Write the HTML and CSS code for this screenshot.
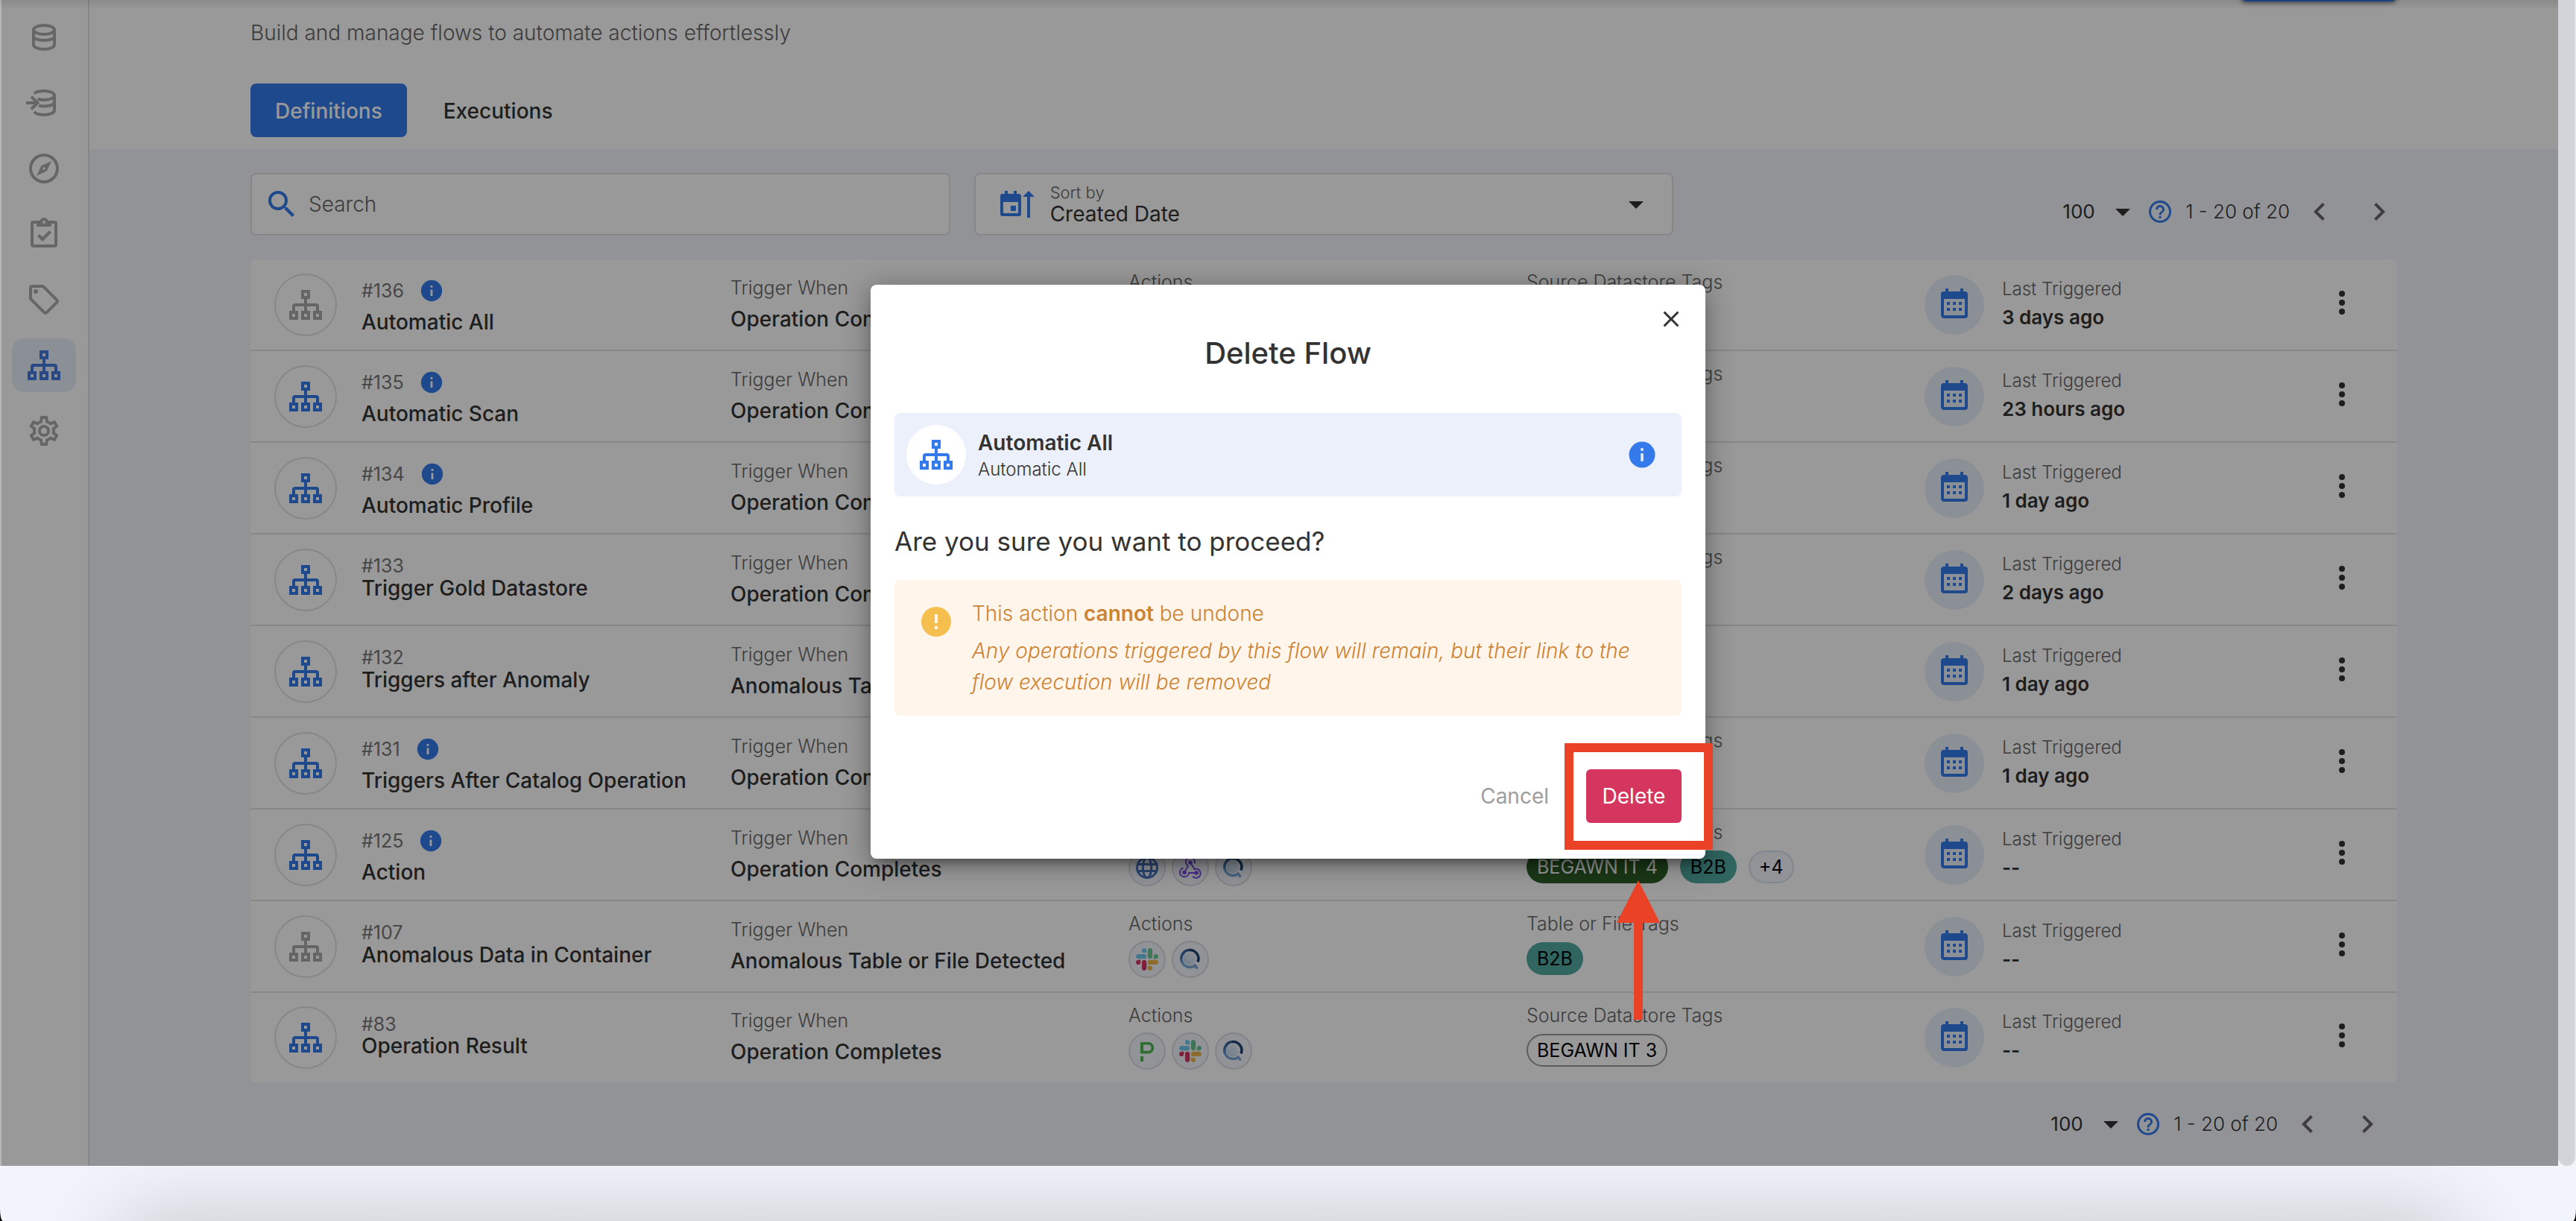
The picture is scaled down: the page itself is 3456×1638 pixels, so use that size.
FILE: index.html
```html
<!DOCTYPE html>
<html lang="en">
<head>
<meta charset="utf-8">
<title>Flows</title>
<link rel="stylesheet" href="styles.css">
</head>
<body>
<svg class="sprite" aria-hidden="true">
  <defs>
    <linearGradient id="q-ring" x1="0" y1="0" x2="0" y2="1">
      <stop offset="0" stop-color="#2f5a94"/><stop offset="0.5" stop-color="#4f7fb8"/><stop offset="0.7" stop-color="#7ba7d6"/>
    </linearGradient>
    <linearGradient id="q-fill" x1="1" y1="0" x2="0" y2="1">
      <stop offset="0" stop-color="#eef2f8"/><stop offset="1" stop-color="#b9cfe8"/>
    </linearGradient>
  </defs>
  <symbol id="database" viewBox="0 0 24 24"><g fill="none" stroke="currentColor" stroke-width="2"><ellipse cx="12" cy="7" rx="7" ry="3"/><path d="M5 7v10c0 1.700 3.100 3 7 3s7-1.300 7-3V7M5 12c1 1.300 3.700 2 7 2s6-.7 7-2"/></g></symbol>
  <symbol id="database-import" viewBox="0 0 24 24"><g fill="none" stroke="currentColor" stroke-width="2"><path d="M5.500 5.800C6.500 4.700 9 4 12 4c3.900 0 7 1.300 7 3s-3.100 3-7 3c-1.600 0-3-.2-4.200-.6M19 7v10c0 1.700-3.100 3-7 3-3 0-5.500-.8-6.500-2M19 12c-1 1.300-3.700 2.200-7 2.200-1.300 0-2.500-.1-3.500-.4M0 12h8M3.500 7.800 7.700 12l-4.200 4.200"/></g></symbol>
  <symbol id="compass" viewBox="0 0 24 24"><path fill="currentColor" fill-rule="evenodd" d="M7,17L10.200,10.200L17,7L13.800,13.800L7,17M12,11.100A0.900,0.900 0 0,0 11.100,12A0.900,0.900 0 0,0 12,12.900A0.900,0.900 0 0,0 12.900,12A0.900,0.900 0 0,0 12,11.100M12,2A10,10 0 0,0 2,12A10,10 0 0,0 12,22A10,10 0 0,0 22,12A10,10 0 0,0 12,2M12,20A8,8 0 1,1 12,4A8,8 0 1,1 12,20Z"/></symbol>
  <symbol id="clipboard" viewBox="0 0 24 24"><path fill="currentColor" d="M19,3H14.820C14.400,1.840 13.300,1 12,1C10.700,1 9.600,1.840 9.180,3H5A2,2 0 0,0 3,5V19A2,2 0 0,0 5,21H19A2,2 0 0,0 21,19V5A2,2 0 0,0 19,3M12,3A1,1 0 0,1 13,4A1,1 0 0,1 12,5A1,1 0 0,1 11,4A1,1 0 0,1 12,3M7,7H17V5H19V19H5V5H7V7M7.500,13.500L9,12L11,14L15.500,9.500L17,11L11,17L7.500,13.500Z"/></symbol>
  <symbol id="tag" viewBox="0 0 24 24"><path fill="currentColor" fill-rule="evenodd" d="M21.410 11.580l-9-9A2 2 0 0 0 11 2H4a2 2 0 0 0-2 2v7a2 2 0 0 0 .59 1.420l9 9A2 2 0 0 0 13 22a2 2 0 0 0 1.410-.59l7-7A2 2 0 0 0 22 13a2 2 0 0 0-.59-1.420M13 20l-9-9V4h7l9 9zM6.500 5A1.500 1.500 0 1 1 5 6.500 1.500 1.500 0 0 1 6.500 5z"/></symbol>
  <symbol id="flow" viewBox="0 0 24 24"><path fill="currentColor" fill-rule="evenodd" d="M9 2h6v6h-2v3h6a2 2 0 0 1 2 2v3h2v6h-6v-6h2v-3h-6v3h2v6H9v-6h2v-3H5v3h2v6H1v-6h2v-3a2 2 0 0 1 2-2h6V8H9zM11 4v2h2V4zM3 18v2h2v-2zM11 18v2h2v-2zM19 18v2h2v-2z"/></symbol>
  <symbol id="cog" viewBox="0 0 24 24"><path fill="currentColor" d="M12,8A4,4 0 0,1 16,12A4,4 0 0,1 12,16A4,4 0 0,1 8,12A4,4 0 0,1 12,8M12,10A2,2 0 0,0 10,12A2,2 0 0,0 12,14A2,2 0 0,0 14,12A2,2 0 0,0 12,10M10,22C9.750,22 9.540,21.820 9.500,21.580L9.130,18.930C8.500,18.680 7.960,18.340 7.440,17.940L4.950,18.950C4.730,19.030 4.460,18.950 4.340,18.730L2.340,15.270C2.210,15.050 2.270,14.780 2.460,14.630L4.570,12.970L4.500,12L4.570,11L2.460,9.370C2.270,9.220 2.210,8.950 2.340,8.730L4.340,5.270C4.460,5.050 4.730,4.960 4.950,5.050L7.440,6.050C7.960,5.660 8.500,5.320 9.130,5.070L9.500,2.420C9.540,2.180 9.750,2 10,2H14C14.250,2 14.460,2.180 14.500,2.420L14.870,5.070C15.500,5.320 16.040,5.660 16.560,6.050L19.050,5.050C19.270,4.960 19.540,5.050 19.660,5.270L21.660,8.730C21.790,8.950 21.730,9.220 21.540,9.370L19.430,11L19.500,12L19.430,13L21.540,14.630C21.730,14.780 21.790,15.050 21.660,15.270L19.660,18.730C19.540,18.950 19.270,19.040 19.050,18.950L16.560,17.950C16.040,18.340 15.500,18.680 14.870,18.930L14.500,21.580C14.460,21.820 14.250,22 14,22H10M11.250,4L10.880,6.610C9.680,6.860 8.620,7.500 7.850,8.390L5.440,7.350L4.690,8.650L6.800,10.200C6.400,11.370 6.400,12.640 6.800,13.800L4.680,15.360L5.430,16.660L7.860,15.620C8.630,16.500 9.680,17.140 10.870,17.380L11.240,20H12.760L13.130,17.390C14.320,17.140 15.370,16.500 16.140,15.620L18.570,16.660L19.320,15.360L17.200,13.810C17.600,12.640 17.600,11.370 17.200,10.200L19.310,8.650L18.560,7.350L16.150,8.390C15.380,7.500 14.320,6.860 13.120,6.620L12.750,4H11.250Z"/></symbol>
  <symbol id="search" viewBox="0 0 24 24"><path fill="currentColor" d="M9.500,3A6.500,6.500 0 0,1 16,9.500C16,11.110 15.410,12.590 14.440,13.730L14.710,14H15.500L20.500,19L19,20.500L14,15.500V14.710L13.730,14.440C12.590,15.410 11.110,16 9.500,16A6.500,6.500 0 0,1 3,9.500A6.500,6.500 0 0,1 9.500,3M9.500,5C7,5 5,7 5,9.500C5,12 7,14 9.500,14C12,14 14,12 14,9.500C14,7 12,5 9.500,5Z"/></symbol>
  <symbol id="sort-date" viewBox="0 0 24 24"><path fill="currentColor" fill-rule="evenodd" d="M3.500 3h2v2h4V3h2v2h1.500a1.500 1.500 0 0 1 1.500 1.500v12a1.500 1.500 0 0 1-1.500 1.500H2A1.500 1.500 0 0 1 .5 18.500v-12A1.500 1.500 0 0 1 2 5h1.500zM2.500 10.500v7.500h10v-7.500zM7.500 13H11v3.500H7.500zM19.500 3l4 4h-3v14h-2V7h-3z"/></symbol>
  <symbol id="caret" viewBox="0 0 24 24"><path fill="currentColor" d="M7 10l5 5 5-5z"/></symbol>
  <symbol id="help" viewBox="0 0 24 24"><path fill="currentColor" d="M11,18H13V16H11V18M12,2A10,10 0 0,0 2,12A10,10 0 0,0 12,22A10,10 0 0,0 22,12A10,10 0 0,0 12,2M12,20C7.590,20 4,16.410 4,12C4,7.590 7.590,4 12,4C16.410,4 20,7.590 20,12C20,16.410 16.410,20 12,20M12,6A4,4 0 0,0 8,10H10A2,2 0 0,1 12,8A2,2 0 0,1 14,10C14,12 11,11.750 11,15H13C13,12.750 16,12.500 16,10A4,4 0 0,0 12,6Z"/></symbol>
  <symbol id="prev" viewBox="0 0 24 24"><path fill="currentColor" d="M15.410,16.580L10.830,12L15.410,7.410L14,6L8,12L14,18L15.410,16.580Z"/></symbol>
  <symbol id="next" viewBox="0 0 24 24"><path fill="currentColor" d="M8.590,16.580L13.170,12L8.590,7.410L10,6L16,12L10,18L8.590,16.580Z"/></symbol>
  <symbol id="info" viewBox="0 0 24 24"><path fill="currentColor" d="M13,9H11V7H13M13,17H11V11H13M12,2A10,10 0 0,0 2,12A10,10 0 0,0 12,22A10,10 0 0,0 22,12A10,10 0 0,0 12,2Z"/></symbol>
  <symbol id="alert" viewBox="0 0 24 24"><path fill="currentColor" d="M13,13H11V7H13M13,17H11V15H13M12,2A10,10 0 0,0 2,12A10,10 0 0,0 12,22A10,10 0 0,0 22,12A10,10 0 0,0 12,2Z"/></symbol>
  <symbol id="calendar" viewBox="0 0 24 24"><path fill="currentColor" d="M9,10V12H7V10H9M13,10V12H11V10H13M17,10V12H15V10H17M19,3A2,2 0 0,1 21,5V19A2,2 0 0,1 19,21H5C3.890,21 3,20.100 3,19V5A2,2 0 0,1 5,3H6V1H8V3H16V1H18V3H19M19,19V8H5V19H19M9,14V16H7V14H9M13,14V16H11V14H13M17,14V16H15V14H17Z"/></symbol>
  <symbol id="dots" viewBox="0 0 24 24"><g fill="currentColor"><circle cx="12" cy="6" r="2"/><circle cx="12" cy="12" r="2"/><circle cx="12" cy="18" r="2"/></g></symbol>
  <symbol id="close" viewBox="0 0 24 24"><path fill="currentColor" d="M19,6.410L17.590,5L12,10.590L6.410,5L5,6.410L10.590,12L5,17.590L6.410,19L12,13.410L17.590,19L19,17.590L13.410,12L19,6.410Z"/></symbol>
  <symbol id="web" viewBox="0 0 30 30"><g fill="none" stroke="#4873bf" stroke-width="3"><circle cx="15" cy="15" r="13.500"/><ellipse cx="15" cy="15" rx="5.700" ry="13.500"/><path d="M2 10.500h26M2 19.500h26"/></g></symbol>
  <symbol id="webhook" viewBox="0 0 30 30"><g fill="none" stroke="#7a4be1" stroke-width="2"><path d="M20.500 9.500A6 6 0 1 0 12 12.500L7.500 20.500M5.500 15.500A6 6 0 1 0 13 22h10"/><path d="M15 8l5.500 9a6 6 0 1 1-2.500 9.500"/></g><g fill="#7a4be1"><circle cx="15" cy="8" r="2.800"/><circle cx="7" cy="21.500" r="2.800"/><circle cx="23" cy="22" r="2.800"/></g></symbol>
  <symbol id="quality" viewBox="0 0 30 30"><circle cx="14" cy="14" r="8.500" fill="url(#q-fill)"/><path d="M24.500 27.500l-3.300-4.300A11.500 11.500 0 1 1 14 2.500" fill="none" stroke="url(#q-ring)" stroke-width="3.600"/><path d="M13.500 2.500A11.500 11.500 0 0 1 24.900 18.500" fill="none" stroke="#1e4370" stroke-width="3.600"/></symbol>
  <symbol id="pager" viewBox="0 0 30 30"><path fill="#4eb750" fill-rule="evenodd" d="M6 3h10.500a7.700 7.700 0 0 1 0 15.400H6zM10 6.600v8.200h6.300a4.100 4.100 0 0 0 0-8.200zM6 22h4v7H6z"/></symbol>
  <symbol id="slack" viewBox="0 0 122.800 122.800"><path fill="#d43564" d="M25.800 77.600c0 7.100-5.800 12.900-12.900 12.900S0 84.700 0 77.600s5.800-12.900 12.900-12.900h12.900v12.900zm6.500 0c0-7.100 5.800-12.900 12.900-12.900s12.900 5.800 12.900 12.900v32.300c0 7.100-5.800 12.900-12.900 12.900s-12.900-5.800-12.900-12.900V77.600z"/><path fill="#6fc6ec" d="M45.200 25.800c-7.100 0-12.900-5.800-12.900-12.900S38.100 0 45.200 0s12.900 5.800 12.900 12.900v12.900H45.200zm0 6.500c7.100 0 12.900 5.800 12.900 12.900s-5.800 12.900-12.900 12.900H12.900C5.800 58.100 0 52.300 0 45.200s5.800-12.900 12.900-12.900h32.300z"/><path fill="#69c28f" d="M97 45.200c0-7.100 5.800-12.900 12.900-12.900s12.900 5.800 12.900 12.900-5.800 12.900-12.900 12.900H97V45.200zm-6.500 0c0 7.100-5.800 12.900-12.900 12.900s-12.900-5.800-12.900-12.900V12.900C64.700 5.800 70.500 0 77.600 0s12.900 5.800 12.900 12.900v32.300z"/><path fill="#ecb54a" d="M77.600 97c7.100 0 12.900 5.800 12.900 12.900s-5.800 12.900-12.900 12.900-12.900-5.800-12.900-12.900V97h12.900zm0-6.500c-7.100 0-12.900-5.800-12.900-12.900s5.800-12.900 12.900-12.900h32.300c7.100 0 12.900 5.800 12.900 12.900s-5.800 12.900-12.900 12.900H77.600z"/></symbol>
</svg>

<div class="window">
  <div class="viewport">
    <div class="app">
      <nav class="sidebar" aria-label="Main">
        <a class="nav-item" href="#" aria-label="Datastores"><svg class="icon"><use href="#database"/></svg></a>
        <a class="nav-item" href="#" aria-label="Enrichment"><svg class="icon"><use href="#database-import"/></svg></a>
        <a class="nav-item" href="#" aria-label="Explore"><svg class="icon"><use href="#compass"/></svg></a>
        <a class="nav-item" href="#" aria-label="Checks"><svg class="icon"><use href="#clipboard"/></svg></a>
        <a class="nav-item" href="#" aria-label="Tags"><svg class="icon"><use href="#tag"/></svg></a>
        <a class="nav-item active" href="#" aria-label="Flows"><svg class="icon"><use href="#flow"/></svg></a>
        <a class="nav-item" href="#" aria-label="Settings"><svg class="icon"><use href="#cog"/></svg></a>
      </nav>

      <main class="main">
        <header class="page-header">
          <div class="header-row">
            <p class="subtitle">Build and manage flows to automate actions effortlessly</p>
            <button class="add-button" aria-label="Add Flow"></button>
          </div>
          <div class="tabs">
            <button class="tab selected">Definitions</button>
            <button class="tab">Executions</button>
          </div>
        </header>

        <section class="content">
          <div class="toolbar">
            <label class="field">
              <svg class="icon accent"><use href="#search"/></svg>
              <input class="search-input" type="text" placeholder="Search" aria-label="Search">
            </label>
            <div class="field sort">
              <svg class="icon accent"><use href="#sort-date"/></svg>
              <div class="sort-text">
                <label class="sort-label" for="sort">Sort by</label>
                <select class="bare-select" id="sort"><option>Created Date</option></select>
              </div>
              <svg class="icon"><use href="#caret"/></svg>
            </div>
            <div class="pagination">
              <label class="page-size"><select class="bare-select" aria-label="Items per page"><option>100</option></select><svg class="icon"><use href="#caret"/></svg></label>
              <svg class="icon help accent"><use href="#help"/></svg>
              <span class="range">1 - 20 of 20</span>
              <button class="pager" aria-label="Previous page"><svg class="icon"><use href="#prev"/></svg></button>
              <button class="pager next" aria-label="Next page"><svg class="icon"><use href="#next"/></svg></button>
            </div>
          </div>

          <ul class="flows">
            <li class="flow">
              <div class="identity"><span class="avatar muted"><svg class="icon"><use href="#flow"/></svg></span>
                <div><div class="flow-id has-info">#136<svg class="info"><use href="#info"/></svg></div><div class="flow-name">Automatic All</div></div></div>
              <div class="trigger"><div class="label">Trigger When</div><div class="value">Operation Completes</div></div>
              <div class="stack"><div class="label">Actions</div></div>
              <div class="stack"><div class="label">Source Datastore Tags</div></div>
              <div class="last"><span class="date-badge"><svg class="icon"><use href="#calendar"/></svg></span><div><div class="last-label">Last Triggered</div><div class="when">3 days ago</div></div></div>
              <button class="menu" aria-label="More"><svg class="icon"><use href="#dots"/></svg></button>
            </li>
            <li class="flow">
              <div class="identity"><span class="avatar"><svg class="icon"><use href="#flow"/></svg></span>
                <div><div class="flow-id has-info">#135<svg class="info"><use href="#info"/></svg></div><div class="flow-name">Automatic Scan</div></div></div>
              <div class="trigger"><div class="label">Trigger When</div><div class="value">Operation Completes</div></div>
              <div class="stack"><div class="label">Actions</div></div>
              <div class="stack"><div class="label">Source Datastore Tags</div></div>
              <div class="last"><span class="date-badge"><svg class="icon"><use href="#calendar"/></svg></span><div><div class="last-label">Last Triggered</div><div class="when">23 hours ago</div></div></div>
              <button class="menu" aria-label="More"><svg class="icon"><use href="#dots"/></svg></button>
            </li>
            <li class="flow">
              <div class="identity"><span class="avatar"><svg class="icon"><use href="#flow"/></svg></span>
                <div><div class="flow-id has-info">#134<svg class="info"><use href="#info"/></svg></div><div class="flow-name">Automatic Profile</div></div></div>
              <div class="trigger"><div class="label">Trigger When</div><div class="value">Operation Completes</div></div>
              <div class="stack"><div class="label">Actions</div></div>
              <div class="stack"><div class="label">Source Datastore Tags</div></div>
              <div class="last"><span class="date-badge"><svg class="icon"><use href="#calendar"/></svg></span><div><div class="last-label">Last Triggered</div><div class="when">1 day ago</div></div></div>
              <button class="menu" aria-label="More"><svg class="icon"><use href="#dots"/></svg></button>
            </li>
            <li class="flow">
              <div class="identity"><span class="avatar"><svg class="icon"><use href="#flow"/></svg></span>
                <div><div class="flow-id">#133</div><div class="flow-name">Trigger Gold Datastore</div></div></div>
              <div class="trigger"><div class="label">Trigger When</div><div class="value">Operation Completes</div></div>
              <div class="stack"><div class="label">Actions</div></div>
              <div class="stack"><div class="label">Source Datastore Tags</div></div>
              <div class="last"><span class="date-badge"><svg class="icon"><use href="#calendar"/></svg></span><div><div class="last-label">Last Triggered</div><div class="when">2 days ago</div></div></div>
              <button class="menu" aria-label="More"><svg class="icon"><use href="#dots"/></svg></button>
            </li>
            <li class="flow">
              <div class="identity"><span class="avatar"><svg class="icon"><use href="#flow"/></svg></span>
                <div><div class="flow-id">#132</div><div class="flow-name">Triggers after Anomaly</div></div></div>
              <div class="trigger"><div class="label">Trigger When</div><div class="value">Anomalous Table or File Detected</div></div>
              <div class="stack"><div class="label">Actions</div></div>
              <div class="stack"><div class="label">Table or File Tags</div></div>
              <div class="last"><span class="date-badge"><svg class="icon"><use href="#calendar"/></svg></span><div><div class="last-label">Last Triggered</div><div class="when">1 day ago</div></div></div>
              <button class="menu" aria-label="More"><svg class="icon"><use href="#dots"/></svg></button>
            </li>
            <li class="flow">
              <div class="identity"><span class="avatar"><svg class="icon"><use href="#flow"/></svg></span>
                <div><div class="flow-id has-info">#131<svg class="info"><use href="#info"/></svg></div><div class="flow-name">Triggers After Catalog Operation</div></div></div>
              <div class="trigger"><div class="label">Trigger When</div><div class="value">Operation Completes</div></div>
              <div class="stack"><div class="label">Actions</div></div>
              <div class="stack"><div class="label">Source Datastore Tags</div></div>
              <div class="last"><span class="date-badge"><svg class="icon"><use href="#calendar"/></svg></span><div><div class="last-label">Last Triggered</div><div class="when">1 day ago</div></div></div>
              <button class="menu" aria-label="More"><svg class="icon"><use href="#dots"/></svg></button>
            </li>
            <li class="flow">
              <div class="identity"><span class="avatar"><svg class="icon"><use href="#flow"/></svg></span>
                <div><div class="flow-id has-info">#125<svg class="info"><use href="#info"/></svg></div><div class="flow-name">Action</div></div></div>
              <div class="trigger"><div class="label">Trigger When</div><div class="value">Operation Completes</div></div>
              <div class="stack"><div class="label">Actions</div>
                <div class="actions"><span class="action"><svg><use href="#web"/></svg></span><span class="action"><svg><use href="#webhook"/></svg></span><span class="action"><svg><use href="#quality"/></svg></span></div></div>
              <div class="stack"><div class="label">Source Datastore Tags</div>
                <div class="tags"><span class="chip green">BEGAWN IT 4</span><span class="chip teal">B2B</span><span class="chip count">+4</span></div></div>
              <div class="last"><span class="date-badge"><svg class="icon"><use href="#calendar"/></svg></span><div><div class="last-label">Last Triggered</div><div class="when">--</div></div></div>
              <button class="menu" aria-label="More"><svg class="icon"><use href="#dots"/></svg></button>
            </li>
            <li class="flow">
              <div class="identity"><span class="avatar muted"><svg class="icon"><use href="#flow"/></svg></span>
                <div><div class="flow-id">#107</div><div class="flow-name">Anomalous Data in Container</div></div></div>
              <div class="trigger"><div class="label">Trigger When</div><div class="value">Anomalous Table or File Detected</div></div>
              <div class="stack"><div class="label">Actions</div>
                <div class="actions"><span class="action"><svg><use href="#slack"/></svg></span><span class="action"><svg><use href="#quality"/></svg></span></div></div>
              <div class="stack"><div class="label">Table or File Tags</div>
                <div class="tags"><span class="chip teal">B2B</span></div></div>
              <div class="last"><span class="date-badge"><svg class="icon"><use href="#calendar"/></svg></span><div><div class="last-label">Last Triggered</div><div class="when">--</div></div></div>
              <button class="menu" aria-label="More"><svg class="icon"><use href="#dots"/></svg></button>
            </li>
            <li class="flow">
              <div class="identity"><span class="avatar"><svg class="icon"><use href="#flow"/></svg></span>
                <div><div class="flow-id">#83</div><div class="flow-name">Operation Result</div></div></div>
              <div class="trigger"><div class="label">Trigger When</div><div class="value">Operation Completes</div></div>
              <div class="stack"><div class="label">Actions</div>
                <div class="actions"><span class="action"><svg><use href="#pager"/></svg></span><span class="action"><svg><use href="#slack"/></svg></span><span class="action"><svg><use href="#quality"/></svg></span></div></div>
              <div class="stack"><div class="label">Source Datastore Tags</div>
                <div class="tags"><span class="chip outline">BEGAWN IT 3</span></div></div>
              <div class="last"><span class="date-badge"><svg class="icon"><use href="#calendar"/></svg></span><div><div class="last-label">Last Triggered</div><div class="when">--</div></div></div>
              <button class="menu" aria-label="More"><svg class="icon"><use href="#dots"/></svg></button>
            </li>
          </ul>

          <div class="pagination bottom">
            <label class="page-size"><select class="bare-select" aria-label="Items per page"><option>100</option></select><svg class="icon"><use href="#caret"/></svg></label>
            <svg class="icon help accent"><use href="#help"/></svg>
            <span class="range">1 - 20 of 20</span>
            <button class="pager" aria-label="Previous page"><svg class="icon"><use href="#prev"/></svg></button>
            <button class="pager next" aria-label="Next page"><svg class="icon"><use href="#next"/></svg></button>
          </div>
        </section>
      </main>
      <div class="scrim"></div>
    </div>
    <div class="scrollbar"></div>

    <div class="dialog-layer">
      <section class="dialog" role="dialog" aria-labelledby="dialog-title">
        <button class="close" aria-label="Close"><svg><use href="#close"/></svg></button>
        <h2 class="dialog-title" id="dialog-title">Delete Flow</h2>
        <div class="summary">
          <span class="summary-badge"><svg class="icon"><use href="#flow"/></svg></span>
          <div class="summary-text"><div class="summary-name">Automatic All</div><div class="summary-description">Automatic All</div></div>
          <svg class="summary-info"><use href="#info"/></svg>
        </div>
        <p class="question">Are you sure you want to proceed?</p>
        <div class="warning">
          <svg class="icon warning-icon"><use href="#alert"/></svg>
          <div>
            <p>This action <strong>cannot</strong> be undone</p>
            <p class="warning-detail">Any operations triggered by this flow will remain, but their link to the flow execution will be removed</p>
          </div>
        </div>
        <div class="dialog-actions">
          <button class="cancel">Cancel</button>
          <div class="callout">
            <button class="delete">Delete</button>
            <svg class="callout-arrow" viewBox="0 0 58 187"><path fill="#ea4226" d="M29 0l29 57H35v130H23V57H0z"/></svg>
          </div>
        </div>
      </section>
    </div>
  </div>
  <footer class="dock"></footer>
</div>
</body>
</html>
```
FILE: styles.css
```css
* { box-sizing: border-box; }

body {
  margin: 0;
  background: #000;
  color: #333;
  font-family: Inter, "Liberation Sans", sans-serif;
  font-size: 28px;
  line-height: 36px;
}

p, h2, ul { margin: 0; padding: 0; font-weight: 400; }
ul { list-style: none; }
svg { display: block; flex: none; }
a { color: inherit; }

button, input, select {
  margin: 0;
  padding: 0;
  border: 0;
  background: none;
  color: inherit;
  font: inherit;
}

.sprite { position: absolute; width: 0; height: 0; }
.icon { width: 48px; height: 48px; }
.accent { color: #347aeb; }

.window {
  display: flex;
  flex-direction: column;
  min-height: 100vh;
  overflow: hidden;
  background: #f1f4fa;
  border-radius: 0 0 4px 4px / 0 0 16px 16px;
}

.viewport { position: relative; display: flex; }
.app { position: relative; display: flex; flex: 1; min-width: 0; background: #fff; }

.scrim {
  position: absolute;
  inset: 0;
  border-left: 2px solid rgba(255, 255, 255, .3);
  background: linear-gradient(rgba(0, 0, 0, .1), rgba(0, 0, 0, 0) 12px), rgba(0, 0, 0, .4);
}

.scrollbar {
  width: 24px;
  border-right: 2px solid #e2e5e8;
  border-radius: 0 0 12px 12px;
  background: #d1d5d9;
}

/* Sidebar */
.sidebar {
  display: flex;
  flex-direction: column;
  gap: 16px;
  width: 120px;
  padding: 14px 16px;
  border-right: 2px solid #e2e2e2;
  color: #aaa;
}

.nav-item {
  display: flex;
  align-items: center;
  justify-content: center;
  height: 72px;
  border-radius: 16px;
}

.nav-item.active { background: #e8eefb; color: #447adf; }

/* Page header */
.main { flex: 1; min-width: 0; background: #f2f5fc; }

.page-header {
  display: flex;
  flex-direction: column;
  gap: 48px;
  padding: 0 216px 16px;
  background: #fff;
}

.header-row { display: flex; justify-content: space-between; align-items: flex-start; height: 64px; }
.subtitle { padding-top: 24px; font-weight: 300; line-height: 40px; color: #666; }

.add-button {
  width: 210px;
  height: 72px;
  margin-top: -70px;
  border-radius: 8px;
  background: #347aeb;
  box-shadow: 0 2px 6px rgba(0, 0, 0, .5);
}

.tabs { display: flex; gap: 16px; }
.tab { height: 72px; padding: 2px 33px 0; border-radius: 8px; font-weight: 500; }
.tab.selected { background: #347aeb; color: #fff; }

/* Toolbar */
.content { display: flex; flex-direction: column; gap: 32px; padding: 32px 216px; }
.toolbar { display: grid; grid-template-columns: repeat(3, minmax(0, 1fr)); gap: 32px; }

.field {
  display: flex;
  align-items: center;
  gap: 12px;
  height: 84px;
  padding: 0 16px;
  border: 2px solid #e2e2e2;
  border-radius: 8px;
  background: #fff;
}

.search-input { flex: 1; min-width: 0; outline: 0; }
.search-input::placeholder { font-weight: 300; color: #666; opacity: 1; }

.sort { gap: 20px; padding: 0 24px 0 32px; }
.sort-text { display: flex; flex: 1; flex-direction: column; }
.sort-label { font-size: 22px; font-weight: 300; line-height: 26px; color: #666; }
.bare-select { appearance: none; height: 32px; line-height: 32px; }

.pagination { display: flex; align-items: center; justify-content: flex-end; gap: 16px; height: 48px; }
.toolbar .pagination { margin-top: 28px; }
.pagination.bottom { padding-right: 16px; }
.page-size { display: flex; align-items: center; margin-right: -8px; }
.page-size .bare-select { width: 57px; font-size: 26px; }
.range { font-size: 26px; font-weight: 300; white-space: nowrap; }
.help { width: 36px; height: 36px; }
.pager { color: #666; }
.pager.next { margin-left: 16px; }

/* Flow list */
.flows { overflow: hidden; border-radius: 8px; background: #fff; }

.flow {
  display: grid;
  grid-template-columns: 612fr 534fr 534fr 534fr 536fr 98fr;
  align-items: center;
  height: 123px;
  padding-left: 32px;
  border-bottom: 2px solid #e2e2e2;
}

.flow:last-child { height: 120px; border-bottom: 0; }
.flow > * { min-width: 0; }
.identity, .last { display: flex; align-items: center; white-space: nowrap; }
.identity { gap: 33px; }

.avatar {
  display: flex;
  align-items: center;
  justify-content: center;
  width: 84px;
  height: 84px;
  border: 2px solid #e2e2e2;
  border-radius: 50%;
  color: #347aeb;
}

.avatar.muted { color: #a8a8a8; }

.flow-id { display: flex; align-items: center; gap: 20px; height: 23px; font-size: 25px; color: #777; }
.flow-id.has-info { height: 48px; }
.info { width: 34px; height: 34px; color: #347aeb; }
.flow-name, .value { font-weight: 500; }
.flow-name { line-height: 37px; }

.label { font-size: 25px; font-weight: 300; line-height: 36px; color: #666; white-space: nowrap; }
.trigger { padding-bottom: 4px; white-space: nowrap; }
.value { margin-top: 6px; }
.stack { align-self: start; padding-top: 12px; }

.actions, .tags { display: flex; }
.actions { gap: 8px; margin-top: 5px; }

.action {
  display: flex;
  align-items: center;
  justify-content: center;
  width: 50px;
  height: 50px;
  border: 2px solid #dbdde2;
  border-radius: 50%;
  background: #f2f5fc;
}

.action svg { width: 30px; height: 30px; }

.tags { gap: 16px; margin-top: 7px; }

.chip {
  height: 44px;
  padding: 0 14px;
  border-radius: 22px;
  font-size: 25px;
  line-height: 44px;
  color: #000;
  white-space: nowrap;
}

.chip.green { background: #2c5e27; color: #fff; }
.chip.teal { background: #51a8a0; }
.chip.outline, .chip.count { padding: 0 12px; border: 2px solid #999; line-height: 40px; }
.chip.count { border-color: #d5dfeb; background: #f2f5fc; }

.last { gap: 24px; }
.last-label { font-size: 24px; font-weight: 300; color: #666; }

.date-badge {
  display: flex;
  align-items: center;
  justify-content: center;
  width: 80px;
  height: 80px;
  border-radius: 50%;
  background: #e8eefb;
  color: #347aeb;
}

.when { padding: 2px 0 4px; font-size: 26px; font-weight: 600; }
.menu { width: 48px; height: 48px; margin-bottom: 6px; }

/* Dialog */
.dialog-layer {
  position: absolute;
  inset: 0;
  display: flex;
  align-items: center;
  justify-content: center;
  padding-bottom: 30px;
}

.dialog {
  display: flex;
  flex-direction: column;
  width: 1120px;
  padding: 28px 32px 48px;
  border-radius: 8px;
  background: #fff;
  box-shadow: 0 11px 15px -7px rgba(0, 0, 0, .4), 0 6px 38px 3px rgba(0, 0, 0, .3);
}

.close { align-self: flex-end; margin-right: -4px; }
.close svg { width: 36px; height: 36px; }
.dialog-title { margin: 4px 0 56px; font-size: 40px; font-weight: 500; line-height: 48px; text-align: center; }

.summary {
  display: flex;
  align-items: center;
  gap: 16px;
  padding: 16px 32px 16px 16px;
  border-radius: 8px;
  background: #ebf0fb;
}

.summary-badge {
  display: flex;
  align-items: center;
  justify-content: center;
  width: 80px;
  height: 80px;
  border-radius: 50%;
  background: #fff;
  color: #347aeb;
}

.summary-text { flex: 1; padding-top: 4px; }
.summary-name { font-weight: 600; }
.summary-description { font-size: 24px; font-weight: 300; }
.summary-info { width: 42px; height: 42px; color: #347aeb; }

.question { margin: 36px 0 28px; font-size: 35px; line-height: 48px; }

.warning {
  display: flex;
  gap: 24px;
  padding: 24px 32px;
  border-radius: 8px;
  background: #fff5eb;
  color: #cc8333;
  font-size: 28px;
  font-weight: 300;
  line-height: 42px;
}

.warning-icon { margin-top: 8px; color: #f5bf4f; }
.warning strong { font-weight: 600; }
.warning p { font-weight: 300; }
.warning-detail { margin-top: 8px; font-style: italic; }

.dialog-actions { display: flex; justify-content: flex-end; gap: 16px; margin-top: 72px; }
.cancel { padding: 0 34px; color: #9e9e9e; }
.delete { display: block; width: 128px; height: 72px; border-radius: 6px; background: #d43660; color: #fff; }

/* Highlight around the confirming button */
.callout { position: relative; }

.callout::before {
  content: "";
  position: absolute;
  inset: -35px -42px -36px -29px;
  border: 12px solid #ea4226;
  pointer-events: none;
}

.callout-arrow { position: absolute; top: 149px; left: 41px; width: 58px; height: 187px; }

/* Strip under the page */
.dock { position: relative; flex: 1; min-height: 74px; overflow: hidden; }

.dock::after {
  content: "";
  position: absolute;
  top: 100%;
  left: 160px;
  right: 160px;
  height: 200px;
  box-shadow: 0 0 120px rgba(0, 0, 0, .2);
}
```
